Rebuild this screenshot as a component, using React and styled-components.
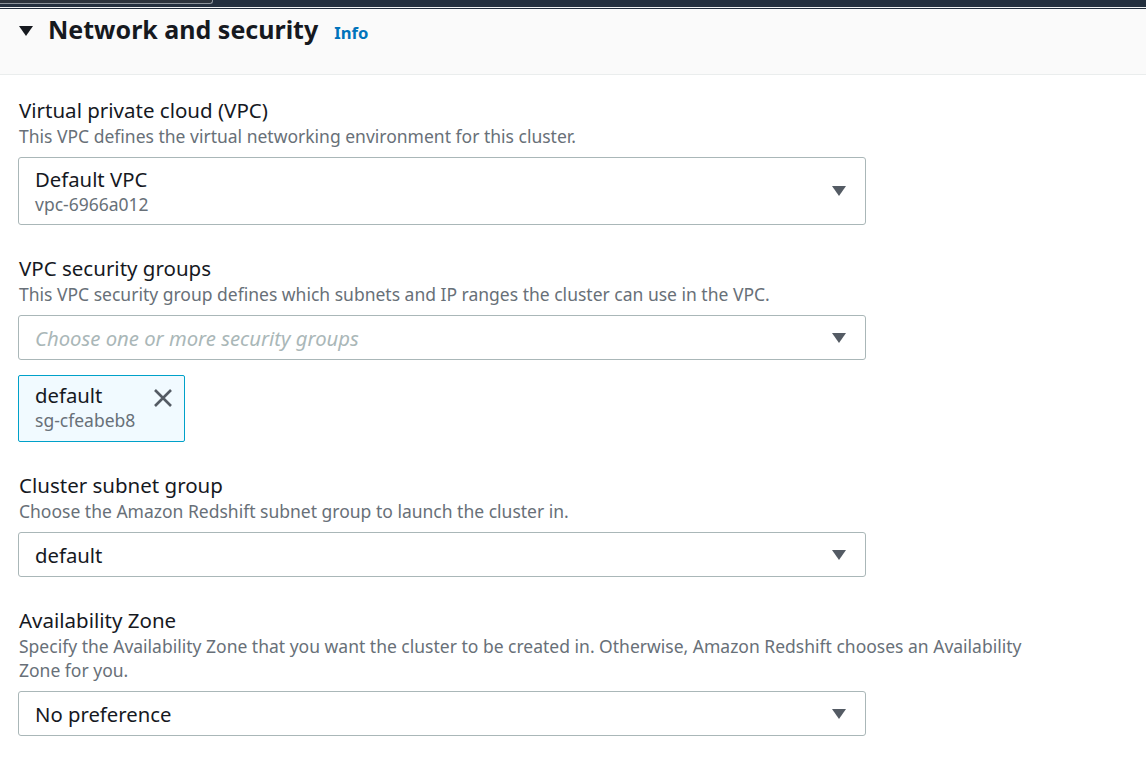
import React from "react";
import styled, { createGlobalStyle } from "styled-components";

const Global = createGlobalStyle`
  html, body { margin: 0; padding: 0; background: #ffffff; }
  body { font-family: "Noto Sans", "Open Sans", sans-serif; color: #16191f; }
`;

const Page = styled.div`
  width: 1146px;
  height: 762px;
  overflow: hidden;
  background: #ffffff;
`;

const TopBar = styled.div`
  height: 7px;
  background: #232f3e;
  border-bottom: 1px solid #f2f3f3;
  display: flex;
  align-items: flex-start;
`;

const TopSearch = styled.div`
  width: 212px;
  height: 3px;
  background: #2b323b;
  border-bottom: 1px solid #8d949c;
  border-right: 1px solid #8d949c;
  border-bottom-right-radius: 3px;
`;

const TopRule = styled.div`
  height: 1px;
  background: #232f3e;
`;

const Header = styled.div`
  height: 66px;
  background: #fafafa;
  border-bottom: 1px solid #eaeded;
  display: flex;
  align-items: flex-start;
  padding: 3px 0 0 19px;
  box-sizing: border-box;
`;

const Caret = styled.span`
  flex: none;
  width: 0;
  height: 0;
  border-left: 7.5px solid transparent;
  border-right: 7.5px solid transparent;
  border-top: 10px solid ${(p) => p.$color || "#16191f"};
  display: inline-block;
`;

const HeaderCaret = styled(Caret)`
  margin-top: 14px;
  margin-right: 15px;
`;

const TitleRow = styled.div`
  display: flex;
  align-items: baseline;
  gap: 16px;
`;

const Title = styled.h2`
  margin: 0;
  font-size: 25px;
  font-weight: 700;
  line-height: 34px;
  color: #16191f;
`;

const Info = styled.a`
  font-size: 16.6px;
  font-weight: 700;
  color: #0073bb;
  line-height: 24px;
  text-decoration: none;
`;

const Body = styled.div`
  padding: 21px 0 0 18px;
  display: flex;
  flex-direction: column;
  gap: 29px;
`;

const Field = styled.div`
  display: flex;
  flex-direction: column;
  max-width: 1040px;
`;

const Label = styled.div`
  font-size: 20.5px;
  line-height: 28px;
  padding-left: 1px;
  color: #16191f;
`;

const Desc = styled.div`
  font-size: 17.5px;
  line-height: 24px;
  padding-left: 1px;
  color: #687078;
`;

const Select = styled.div`
  margin-top: 9px;
  width: 848px;
  box-sizing: border-box;
  border: 1px solid #aab7b8;
  border-radius: 3px;
  display: flex;
  align-items: center;
  justify-content: space-between;
  padding: 0 19px 0 16px;
  height: ${(p) => (p.$tall ? "68px" : "45px")};
`;

const SelectText = styled.div`
  display: flex;
  flex-direction: column;
`;

const Value = styled.span`
  font-size: 20.3px;
  line-height: 26px;
  color: ${(p) => (p.$placeholder ? "#aab7b8" : "#16191f")};
  font-style: ${(p) => (p.$placeholder ? "italic" : "normal")};
`;

const Sub = styled.span`
  font-size: 17.5px;
  line-height: 24px;
  color: #687078;
`;

const Token = styled.div`
  margin-top: 15px;
  width: 167px;
  height: 67px;
  box-sizing: border-box;
  background: #f1faff;
  border: 1px solid #00a1c9;
  border-radius: 2px;
  display: flex;
  justify-content: space-between;
  align-items: flex-start;
  padding: 6px 11px 0 16px;
`;

const Close = styled.svg`
  margin-top: 6px;
  flex: none;
`;

const Dropdown = ({ children, tall }) => (
  <Select $tall={tall}>
    <SelectText>{children}</SelectText>
    <Caret $color="#545b64" />
  </Select>
);

export default function App() {
  return (
    <Page>
      <Global />
      <TopBar>
        <TopSearch />
      </TopBar>
      <TopRule />
      <Header>
        <HeaderCaret />
        <TitleRow>
          <Title>Network and security</Title>
          <Info>Info</Info>
        </TitleRow>
      </Header>
      <Body>
        <Field>
          <Label>Virtual private cloud (VPC)</Label>
          <Desc>This VPC defines the virtual networking environment for this cluster.</Desc>
          <Dropdown tall>
            <Value>Default VPC</Value>
            <Sub>vpc-6966a012</Sub>
          </Dropdown>
        </Field>
        <Field>
          <Label>VPC security groups</Label>
          <Desc>This VPC security group defines which subnets and IP ranges the cluster can use in the VPC.</Desc>
          <Dropdown>
            <Value $placeholder>Choose one or more security groups</Value>
          </Dropdown>
          <Token>
            <SelectText>
              <Value>default</Value>
              <Sub>sg-cfeabeb8</Sub>
            </SelectText>
            <Close width="20" height="20" viewBox="0 0 20 20">
              <path d="M2 2 L18 18 M18 2 L2 18" stroke="#545b64" strokeWidth="2.6" fill="none" />
            </Close>
          </Token>
        </Field>
        <Field>
          <Label>Cluster subnet group</Label>
          <Desc>Choose the Amazon Redshift subnet group to launch the cluster in.</Desc>
          <Dropdown>
            <Value>default</Value>
          </Dropdown>
        </Field>
        <Field>
          <Label>Availability Zone</Label>
          <Desc>
            Specify the Availability Zone that you want the cluster to be created in. Otherwise, Amazon Redshift chooses an Availability Zone for you.
          </Desc>
          <Dropdown>
            <Value>No preference</Value>
          </Dropdown>
        </Field>
      </Body>
    </Page>
  );
}
